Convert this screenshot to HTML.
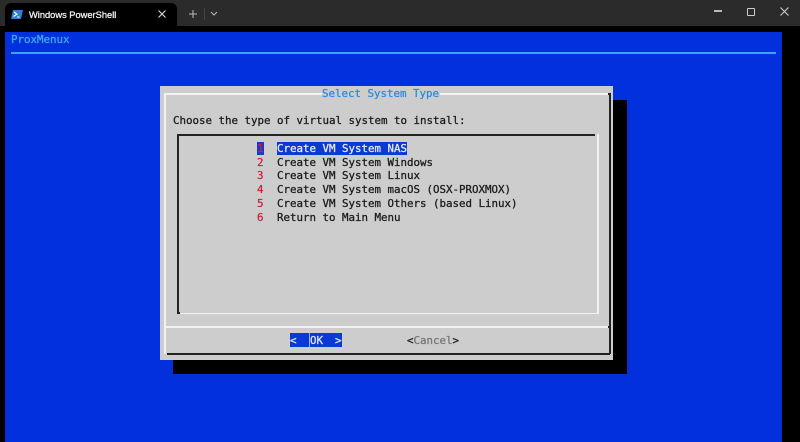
<!DOCTYPE html>
<html><head><meta charset="utf-8"><style>
html,body{margin:0;padding:0;width:800px;height:442px;overflow:hidden;background:#000}
div,span{position:absolute;white-space:pre}
.m{font-family:"DejaVu Sans Mono","Liberation Mono",monospace;font-size:10.8px;line-height:14px;color:#1c1c1c;-webkit-text-stroke:0.3px currentColor}
.r{color:#c8243c}
.l{background:#f2f2f2}
.d{background:#222}
</style></head><body>
<div style="left:0;top:0;width:800px;height:26px;background:#2b2b2b"></div>
<div style="left:5px;top:3px;width:172px;height:24px;background:#000;border-radius:6px 6px 0 0"></div>
<svg style="position:absolute;left:11px;top:9px" width="12" height="12" viewBox="0 0 12 12"><path d="M2 1H12L10 10H0Z" fill="#2f7fd8"/><path d="M3 3L6 5.2L2.5 7.5M6 8H8.5" stroke="#fff" stroke-width="1.1" fill="none"/></svg>
<div style="left:29px;top:8px;font:9.3px/14px 'Liberation Sans',sans-serif;color:#f2f2f2;-webkit-text-stroke:0.3px #f2f2f2">Windows PowerShell</div>
<svg style="position:absolute;left:157px;top:9px" width="10" height="10"><path d="M1.5 1.5L8.5 8.5M8.5 1.5L1.5 8.5" stroke="#ddd" stroke-width="1.1"/></svg>
<svg style="position:absolute;left:188px;top:9px" width="10" height="10"><path d="M5 1V9M1 5H9" stroke="#bbb" stroke-width="1"/></svg>
<div style="left:204px;top:8px;width:1px;height:12px;background:#444"></div>
<svg style="position:absolute;left:210px;top:11px" width="8" height="6"><path d="M1 1L4 4L7 1" stroke="#bbb" stroke-width="1" fill="none"/></svg>
<div style="left:714px;top:10px;width:8px;height:1.5px;background:#bbb"></div>
<div style="left:747px;top:8px;width:6px;height:6px;border:1.2px solid #ccc;border-radius:1px"></div>
<svg style="position:absolute;left:779px;top:6px" width="11" height="11"><path d="M1.5 1.5L9.5 9.5M9.5 1.5L1.5 9.5" stroke="#ccc" stroke-width="1.1"/></svg>

<div style="left:5px;top:32px;width:777px;height:410px;background:#0230dc"></div>
<div class="m" style="left:11px;top:33px;color:#3fa9f5">ProxMenux</div>
<div style="left:11px;top:52px;width:765px;height:1.5px;background:#3aa5f5"></div>

<div style="left:173px;top:100px;width:454px;height:274px;background:#000"></div>
<div style="left:160px;top:86px;width:453px;height:274px;background:#cdcdcd"></div>
<div class="l" style="left:164px;top:93px;width:158px;height:1.5px"></div>
<div class="l" style="left:440px;top:93px;width:168px;height:1.5px"></div>
<div class="l" style="left:164px;top:93px;width:1.5px;height:261px"></div>
<div class="d" style="left:609px;top:93px;width:1.5px;height:261px"></div>
<div class="d" style="left:167px;top:353px;width:443px;height:1.5px"></div>
<div class="l" style="left:165px;top:326px;width:444px;height:1.5px"></div>
<div class="d" style="left:608px;top:326px;width:3px;height:1.5px"></div>
<div class="d" style="left:608px;top:93px;width:3px;height:2px"></div>

<div class="m" style="left:322px;top:87px;color:#2f8ae6">Select System Type</div>
<div class="m" style="left:173px;top:114px">Choose the type of virtual system to install:</div>

<div class="d" style="left:177px;top:134px;width:418px;height:1.5px"></div>
<div class="d" style="left:177px;top:134px;width:1.5px;height:180px"></div>
<div class="l" style="left:597px;top:134px;width:1.5px;height:180px"></div>
<div class="l" style="left:180px;top:312.5px;width:418px;height:1.5px"></div>
<div class="d" style="left:177px;top:312px;width:3px;height:2px"></div>

<div style="left:257px;top:142px;width:7px;height:13px;background:#1d38c8"></div>
<div style="left:277px;top:142px;width:130px;height:13px;background:#0a3ad6"></div>
<div class="m r" style="left:257px;top:142px">1</div>
<div class="m" style="left:277px;top:142px;color:#e8e8e8">Create VM System NAS</div>
<div class="m r" style="left:257px;top:156px">2</div>
<div class="m" style="left:277px;top:156px">Create VM System Windows</div>
<div class="m r" style="left:257px;top:169px">3</div>
<div class="m" style="left:277px;top:169px">Create VM System Linux</div>
<div class="m r" style="left:257px;top:183px">4</div>
<div class="m" style="left:277px;top:183px">Create VM System macOS (OSX-PROXMOX)</div>
<div class="m r" style="left:257px;top:197px">5</div>
<div class="m" style="left:277px;top:197px">Create VM System Others (based Linux)</div>
<div class="m r" style="left:257px;top:211px">6</div>
<div class="m" style="left:277px;top:211px">Return to Main Menu</div>

<div style="left:290px;top:333px;width:52px;height:14px;background:#0a3ad6"></div>
<div style="left:309px;top:333px;width:1px;height:14px;background:#9fb0e8"></div>
<div class="m" style="left:290px;top:334px;color:#e4e4e4">&lt;</div>
<div class="m" style="left:310px;top:334px;color:#e4e4e4">OK</div>
<div class="m" style="left:335px;top:334px;color:#e4e4e4">&gt;</div>
<div class="m" style="left:407px;top:334px;color:#222">&lt;<span style="position:static;color:#777">Cancel</span>&gt;</div>
</body></html>
